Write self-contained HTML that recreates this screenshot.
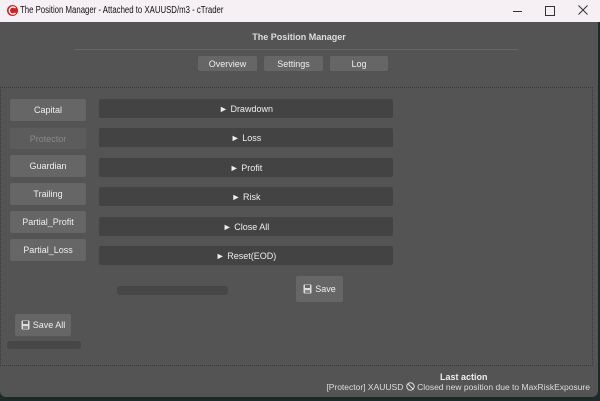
<!DOCTYPE html>
<html><head><style>
body{margin:0;width:600px;height:401px;background:#1d2a2a;font-family:"Liberation Sans",sans-serif;overflow:hidden;position:relative}
.t{position:absolute;left:0;top:0;width:600px;height:22px;background:#f6f0f4;font-size:11px;color:#111}
.w{position:absolute;left:0;top:22px;width:598px;height:375px;background:#545454;border-radius:0 0 6px 6px}
.a{position:absolute}
.btn{position:absolute;background:#666;color:#eee;font-size:9px;display:flex;align-items:center;justify-content:center;border-radius:2px}
.bar{position:absolute;left:99px;width:294px;height:19px;background:#434343;color:#eee;font-size:9px;display:flex;align-items:center;justify-content:center;border-radius:2px}
.fl{margin-right:3px}
</style></head><body>
<div class="t">
<svg class="a" style="left:7px;top:5px" width="11" height="11"><circle cx="5.5" cy="5.5" r="5.5" fill="#d42020"/><path d="M8.5 3A3.6 3.6 0 1 0 8.5 8" stroke="#fff" stroke-width="1.4" fill="none"/></svg>
<span class="a" style="left:20px;top:5px;font-size:10px;transform:scaleX(0.78);transform-origin:left;white-space:nowrap">The Position Manager - Attached to XAUUSD/m3 - cTrader</span>
<span class="a" style="left:513px;top:11px;width:9px;height:1px;background:#333"></span>
<span class="a" style="left:545px;top:6px;width:8px;height:8px;border:1px solid #333"></span>
<svg class="a" style="left:578px;top:5px" width="10" height="10"><path d="M0.5 0.5L9.5 9.5M9.5 0.5L0.5 9.5" stroke="#333" stroke-width="1"/></svg>
</div>
<div class="w">
<div class="a" style="left:0;width:598px;top:10px;text-align:center;font-size:9px;font-weight:bold;color:#ddd">The Position Manager</div>
<div class="a" style="left:75px;top:27px;width:443px;height:1px;background:#666"></div>
<div class="btn" style="left:198px;top:34px;width:59px;height:15px">Overview</div>
<div class="btn" style="left:264px;top:34px;width:59px;height:15px">Settings</div>
<div class="btn" style="left:330px;top:34px;width:58px;height:15px">Log</div>
<div class="a" style="left:0;top:65px;width:593px;height:279px;border:1px dotted #3a3a3a;box-sizing:border-box"></div>
<div class="btn" style="left:10px;top:77px;width:76px;height:22px">Capital</div>
<div class="btn" style="left:10px;top:106px;width:76px;height:21px;background:#5c5c5c;color:#888">Protector</div>
<div class="btn" style="left:10px;top:133px;width:76px;height:22px">Guardian</div>
<div class="btn" style="left:10px;top:161px;width:76px;height:22px">Trailing</div>
<div class="btn" style="left:10px;top:189px;width:76px;height:22px">Partial_Profit</div>
<div class="btn" style="left:10px;top:217px;width:76px;height:22px">Partial_Loss</div>
<div class="bar" style="top:77px">► Drawdown</div>
<div class="bar" style="top:106px">► Loss</div>
<div class="bar" style="top:136px">► Profit</div>
<div class="bar" style="top:165px">► Risk</div>
<div class="bar" style="top:195px">► Close All</div>
<div class="bar" style="top:224px">► Reset(EOD)</div>
<div class="a" style="left:117px;top:264px;width:111px;height:9px;background:#474747;border-radius:3px"></div>
<div class="btn" style="left:296px;top:254px;width:47px;height:26px"><svg class="fl" width="9" height="10"><rect x="0.5" y="0.5" width="8" height="9" rx="1" fill="#ddd"/><rect x="2" y="1" width="5" height="3" fill="#666"/><rect x="2" y="6" width="5" height="3" fill="#888"/></svg>Save</div>
<div class="btn" style="left:15px;top:292px;width:56px;height:22px"><svg class="fl" width="9" height="10"><rect x="0.5" y="0.5" width="8" height="9" rx="1" fill="#ddd"/><rect x="2" y="1" width="5" height="3" fill="#666"/><rect x="2" y="6" width="5" height="3" fill="#888"/></svg>Save All</div>
<div class="a" style="left:7px;top:319px;width:74px;height:8px;background:#474747;border-radius:3px"></div>
<div class="a" style="left:440px;top:350px;font-size:9px;font-weight:bold;color:#eee">Last action</div>
<div class="a" style="right:8px;top:360px;font-size:8.5px;color:#ddd;white-space:nowrap">[Protector] XAUUSD <svg width="9" height="9" style="vertical-align:-1px"><circle cx="4.5" cy="4.5" r="3.7" stroke="#ddd" fill="none" stroke-width="1"/><path d="M2 2L7 7" stroke="#ddd"/></svg> Closed new position due to MaxRiskExposure</div>
</div>
</body></html>
